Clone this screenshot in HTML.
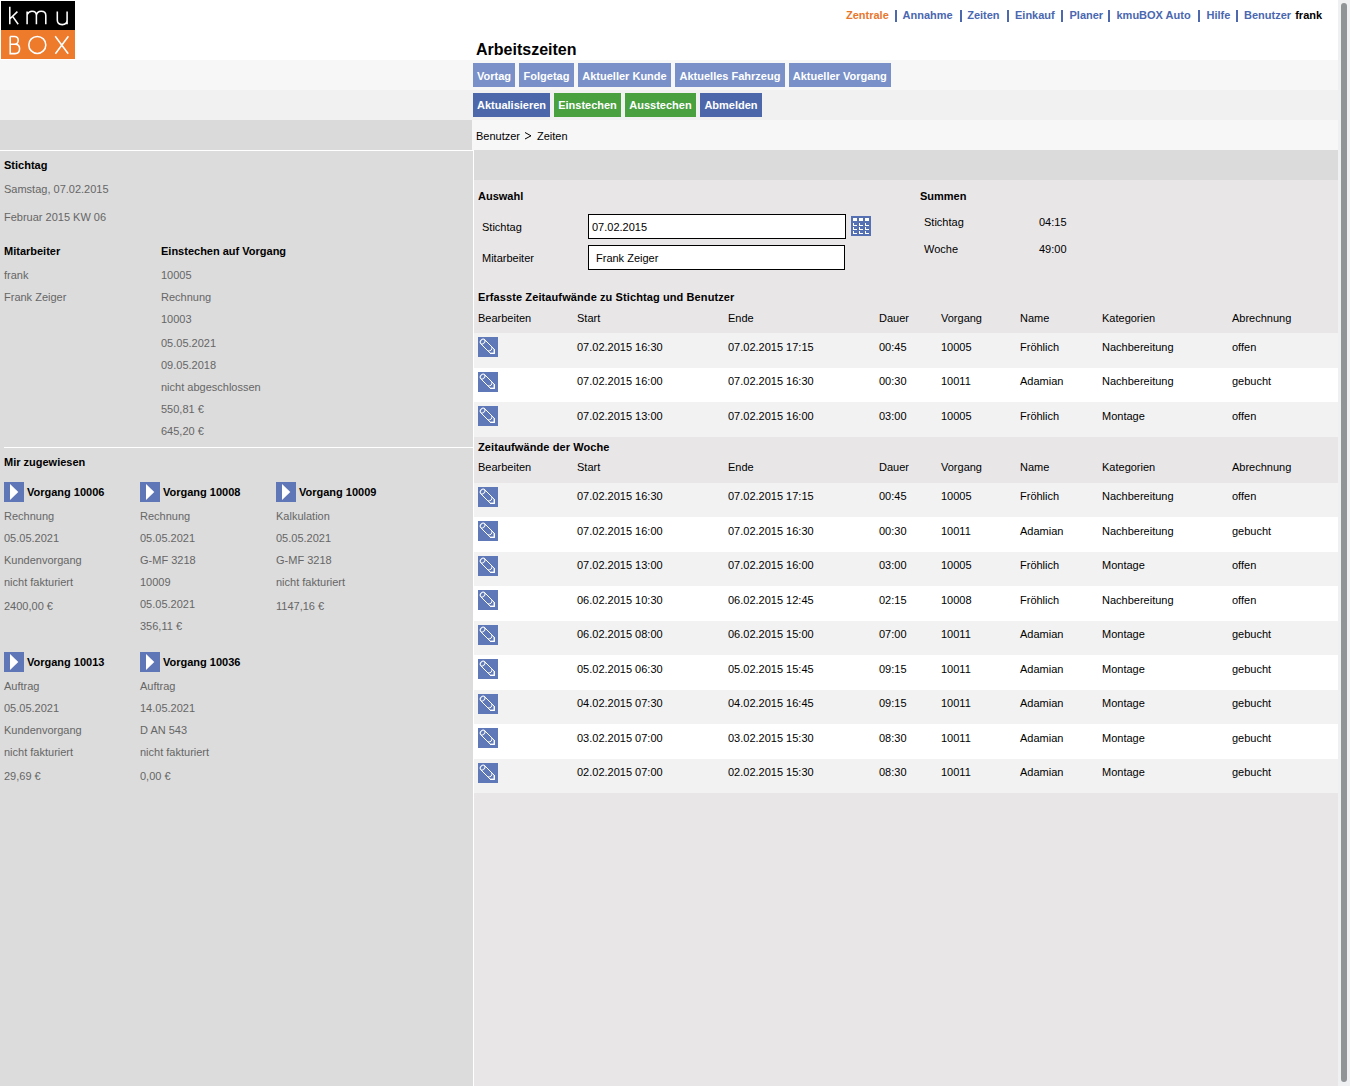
<!DOCTYPE html>
<html><head><meta charset="utf-8">
<style>
*{margin:0;padding:0;box-sizing:border-box}
html,body{width:1350px;height:1086px;overflow:hidden;background:#fff}
body{font-family:"Liberation Sans",sans-serif;font-size:11px;color:#000;position:relative}
.a{position:absolute;white-space:nowrap;line-height:13px}
.a svg{display:block}
.b{font-weight:bold}
.g{color:#666}
#logo{position:absolute;left:1px;top:1px;width:74px;height:58px}
#nav{position:absolute;top:0;left:0;font-weight:bold;line-height:13px;white-space:nowrap}
#nav a,#nav span{position:absolute;top:9px}
#nav a{color:#4a67b0;text-decoration:none}
#nav .sep{position:absolute;top:10px;width:2px;height:12px;background:#4d68ad}
.bar{position:absolute;left:0;width:1338px}
.btn{position:absolute;height:24px;color:#fff;font-weight:bold;line-height:24px;text-align:center;white-space:nowrap}
.l1{background:#7990c8}
.d1{background:#4c68ab}
.gr{background:#48a03f}
.inp{position:absolute;background:#fff;border:1px solid #000}
#sb{position:absolute;left:1338px;top:0;width:12px;height:1086px;background:#eff0f2}
#thumb{position:absolute;left:2.8px;top:2.8px;width:6px;height:1079px;border-radius:3px;background:#909497}
.row{position:absolute;left:474px;width:864px}

</style></head><body>
<svg id="logo" viewBox="0 0 74 58"><rect x="0" y="0" width="74" height="29" fill="#000"/><rect x="0" y="29" width="74" height="29.5" fill="#ee7a2b"/><g fill="none" stroke="#fff" stroke-width="1.55"><path d="M8.8 5.8 V23.2 M9 17.8 L16.4 10.6 M11.6 15.4 L17.2 23.2"/><path d="M26.1 23.2 V10.4 M26.1 13.6 Q27.8 10.2 31 10.2 Q35.4 10.2 35.4 14.4 V23.2 M35.4 14.4 Q35.9 10.2 40.2 10.2 Q44.8 10.2 44.8 14.4 V23.2"/><path d="M56.3 10.4 V19 Q56.3 23.6 61.2 23.6 Q66.1 23.6 66.1 19 V10.4 M66.1 19 V23.2"/><path d="M9.2 35.4 V52.6 H14 Q18.6 52.6 18.6 47.8 Q18.6 43.2 14 43.2 H9.2 M9.2 35.4 H13.4 Q17.2 35.4 17.2 39.2 Q17.2 43.2 13.2 43.2"/><circle cx="36.3" cy="43.9" r="8.5"/><path d="M54.2 35.2 L67.2 52.8 M67.4 35.2 L54.4 52.8"/></g></svg>
<div id="nav"><a style="left:846px;color:#e8772e">Zentrale</a><a style="left:902.5px">Annahme</a><a style="left:967.2px">Zeiten</a><a style="left:1015px">Einkauf</a><a style="left:1069.5px">Planer</a><a style="left:1116.5px">kmuBOX Auto</a><a style="left:1206.5px">Hilfe</a><a style="left:1244px">Benutzer</a><a style="left:1295.2px;color:#000">frank</a><i class="sep" style="left:895px"></i><i class="sep" style="left:960px"></i><i class="sep" style="left:1007px"></i><i class="sep" style="left:1061px"></i><i class="sep" style="left:1108px"></i><i class="sep" style="left:1198px"></i><i class="sep" style="left:1236px"></i></div>
<div class="a b" style="left:476px;top:41px;font-size:16px;line-height:18px">Arbeitszeiten</div>
<div class="bar" style="top:60px;height:30px;background:#f7f7f7"></div>
<div class="bar" style="top:90px;height:30px;background:#f1f1f1"></div>
<div class="bar" style="top:120px;height:30px;left:0;width:472px;background:#dadada"></div>
<div class="bar" style="top:120px;height:30px;left:472px;width:866px;background:#f7f7f7"></div>
<div class="bar" style="top:150px;height:936px;left:0;width:474px;background:#fff"></div>
<div class="bar" style="top:151px;height:935px;left:0;width:472.8px;background:#dcdcdc"></div>
<div class="bar" style="top:150px;height:30px;left:474px;width:864px;background:#dbdbdb"></div>
<div class="bar" style="top:180px;height:906px;left:474px;width:864px;background:#e8e6e7"></div>
<div class="a b" style="left:4px;top:159px;">Stichtag</div>
<div class="a g" style="left:4px;top:183px;">Samstag, 07.02.2015</div>
<div class="a g" style="left:4px;top:211px;">Februar 2015 KW 06</div>
<div class="a b" style="left:4px;top:245px;">Mitarbeiter</div>
<div class="a g" style="left:4px;top:269px;">frank</div>
<div class="a g" style="left:4px;top:291px;">Frank Zeiger</div>
<div class="a b" style="left:161px;top:245px;">Einstechen auf Vorgang</div>
<div class="a g" style="left:161px;top:269px;">10005</div>
<div class="a g" style="left:161px;top:291px;">Rechnung</div>
<div class="a g" style="left:161px;top:313px;">10003</div>
<div class="a g" style="left:161px;top:337px;">05.05.2021</div>
<div class="a g" style="left:161px;top:359px;">09.05.2018</div>
<div class="a g" style="left:161px;top:381px;">nicht abgeschlossen</div>
<div class="a g" style="left:161px;top:403px;">550,81 &euro;</div>
<div class="a g" style="left:161px;top:425px;">645,20 &euro;</div>
<div class="bar" style="top:447px;height:1px;left:4px;width:468.8px;background:#fff"></div>
<div class="a b" style="left:4px;top:456px;">Mir zugewiesen</div>
<div class="a" style="left:4px;top:482px;width:20px;height:20px"><svg width="20" height="20" viewBox="0 0 20 20"><rect width="20" height="20" fill="#5f77b7"/><path d="M6 2 L14.3 10 L6 18 Z" fill="#fff"/></svg></div>
<div class="a b" style="left:27px;top:486px;">Vorgang 10006</div>
<div class="a g" style="left:4px;top:510px;">Rechnung</div>
<div class="a g" style="left:4px;top:532px;">05.05.2021</div>
<div class="a g" style="left:4px;top:554px;">Kundenvorgang</div>
<div class="a g" style="left:4px;top:576px;">nicht fakturiert</div>
<div class="a g" style="left:4px;top:600px;">2400,00 &euro;</div>
<div class="a" style="left:140px;top:482px;width:20px;height:20px"><svg width="20" height="20" viewBox="0 0 20 20"><rect width="20" height="20" fill="#5f77b7"/><path d="M6 2 L14.3 10 L6 18 Z" fill="#fff"/></svg></div>
<div class="a b" style="left:163px;top:486px;">Vorgang 10008</div>
<div class="a g" style="left:140px;top:510px;">Rechnung</div>
<div class="a g" style="left:140px;top:532px;">05.05.2021</div>
<div class="a g" style="left:140px;top:554px;">G-MF 3218</div>
<div class="a g" style="left:140px;top:576px;">10009</div>
<div class="a g" style="left:140px;top:598px;">05.05.2021</div>
<div class="a g" style="left:140px;top:620px;">356,11 &euro;</div>
<div class="a" style="left:276px;top:482px;width:20px;height:20px"><svg width="20" height="20" viewBox="0 0 20 20"><rect width="20" height="20" fill="#5f77b7"/><path d="M6 2 L14.3 10 L6 18 Z" fill="#fff"/></svg></div>
<div class="a b" style="left:299px;top:486px;">Vorgang 10009</div>
<div class="a g" style="left:276px;top:510px;">Kalkulation</div>
<div class="a g" style="left:276px;top:532px;">05.05.2021</div>
<div class="a g" style="left:276px;top:554px;">G-MF 3218</div>
<div class="a g" style="left:276px;top:576px;">nicht fakturiert</div>
<div class="a g" style="left:276px;top:600px;">1147,16 &euro;</div>
<div class="a" style="left:4px;top:652px;width:20px;height:20px"><svg width="20" height="20" viewBox="0 0 20 20"><rect width="20" height="20" fill="#5f77b7"/><path d="M6 2 L14.3 10 L6 18 Z" fill="#fff"/></svg></div>
<div class="a b" style="left:27px;top:656px;">Vorgang 10013</div>
<div class="a g" style="left:4px;top:680px;">Auftrag</div>
<div class="a g" style="left:4px;top:702px;">05.05.2021</div>
<div class="a g" style="left:4px;top:724px;">Kundenvorgang</div>
<div class="a g" style="left:4px;top:746px;">nicht fakturiert</div>
<div class="a g" style="left:4px;top:770px;">29,69 &euro;</div>
<div class="a" style="left:140px;top:652px;width:20px;height:20px"><svg width="20" height="20" viewBox="0 0 20 20"><rect width="20" height="20" fill="#5f77b7"/><path d="M6 2 L14.3 10 L6 18 Z" fill="#fff"/></svg></div>
<div class="a b" style="left:163px;top:656px;">Vorgang 10036</div>
<div class="a g" style="left:140px;top:680px;">Auftrag</div>
<div class="a g" style="left:140px;top:702px;">14.05.2021</div>
<div class="a g" style="left:140px;top:724px;">D AN 543</div>
<div class="a g" style="left:140px;top:746px;">nicht fakturiert</div>
<div class="a g" style="left:140px;top:770px;">0,00 &euro;</div>
<div class="btn l1" style="left:473px;top:63px;width:42px;line-height:26px">Vortag</div>
<div class="btn l1" style="left:519px;top:63px;width:55px;line-height:26px">Folgetag</div>
<div class="btn l1" style="left:578px;top:63px;width:93px;line-height:26px">Aktueller Kunde</div>
<div class="btn l1" style="left:675px;top:63px;width:110px;line-height:26px">Aktuelles Fahrzeug</div>
<div class="btn l1" style="left:789px;top:63px;width:101.5px;line-height:26px">Aktueller Vorgang</div>
<div class="btn d1" style="left:473px;top:93px;width:77px;line-height:24px">Aktualisieren</div>
<div class="btn gr" style="left:554px;top:93px;width:67px;line-height:24px">Einstechen</div>
<div class="btn gr" style="left:625px;top:93px;width:71px;line-height:24px">Ausstechen</div>
<div class="btn d1" style="left:700px;top:93px;width:62px;line-height:24px">Abmelden</div>
<div class="a " style="left:476px;top:130px;">Benutzer</div>
<svg style="position:absolute;left:524px;top:131px" width="9" height="10" viewBox="0 0 9 10"><path d="M1 1.5 L7 4.8 L1 8" fill="none" stroke="#000" stroke-width="1"/></svg>
<div class="a " style="left:537px;top:130px;">Zeiten</div>
<div class="a b" style="left:478px;top:190px;">Auswahl</div>
<div class="a " style="left:482px;top:221px;">Stichtag</div>
<div class="a " style="left:482px;top:252px;">Mitarbeiter</div>
<div class="inp" style="left:588px;top:214px;width:258px;height:25px"></div>
<div class="inp" style="left:588px;top:245px;width:257px;height:25px"></div>
<div class="a " style="left:592px;top:221px;">07.02.2015</div>
<div class="a " style="left:596px;top:252px;">Frank Zeiger</div>
<div class="a" style="left:851px;top:216px;width:20px;height:20px"><svg width="20" height="20" viewBox="0 0 20 20"><rect width="20" height="20" fill="#5670b4"/><rect x="2" y="2" width="4" height="3" fill="#fff"/><path d="M2 7 h1 v2 h3 v1 h-4 Z" fill="#fff"/><path d="M2 11 h1 v2 h3 v1 h-4 Z" fill="#fff"/><path d="M2 15 h1 v2 h3 v1 h-4 Z" fill="#fff"/><rect x="8" y="2" width="4" height="3" fill="#fff"/><path d="M8 7 h1 v2 h3 v1 h-4 Z" fill="#fff"/><path d="M8 11 h1 v2 h3 v1 h-4 Z" fill="#fff"/><path d="M8 15 h1 v2 h3 v1 h-4 Z" fill="#fff"/><rect x="14" y="2" width="4" height="3" fill="#fff"/><path d="M14 7 h1 v2 h3 v1 h-4 Z" fill="#fff"/><path d="M14 11 h1 v2 h3 v1 h-4 Z" fill="#fff"/><path d="M14 15 h1 v2 h3 v1 h-4 Z" fill="#fff"/></svg></div>
<div class="a b" style="left:920px;top:190px;">Summen</div>
<div class="a " style="left:924px;top:216px;">Stichtag</div>
<div class="a " style="left:1039px;top:216px;">04:15</div>
<div class="a " style="left:924px;top:243px;">Woche</div>
<div class="a " style="left:1039px;top:243px;">49:00</div>
<div class="a b" style="left:478px;top:291px;letter-spacing:0.1px">Erfasste Zeitaufw&auml;nde zu Stichtag und Benutzer</div>
<div class="a " style="left:478px;top:312px;">Bearbeiten</div>
<div class="a " style="left:577px;top:312px;">Start</div>
<div class="a " style="left:728px;top:312px;">Ende</div>
<div class="a " style="left:879px;top:312px;">Dauer</div>
<div class="a " style="left:941px;top:312px;">Vorgang</div>
<div class="a " style="left:1020px;top:312px;">Name</div>
<div class="a " style="left:1102px;top:312px;">Kategorien</div>
<div class="a " style="left:1232px;top:312px;">Abrechnung</div>
<div class="row" style="top:333px;height:35px;background:#f2f2f2"></div>
<div class="a" style="left:478px;top:337px;width:20px;height:20px"><svg width="20" height="20" viewBox="0 0 20 20"><rect width="20" height="20" fill="#5f78b8"/><g fill="none" stroke="#fff" stroke-width="1"><ellipse cx="4.6" cy="4.6" rx="2.7" ry="2" transform="rotate(-45 4.6 4.6)"/><path d="M6.6 2.6 L14 10 M2.6 6.6 L10 14"/><path d="M14 10 Q14.2 14.2 10 14"/><path d="M10 14 L12.3 16.3 H16.3 V12.3 L14 10"/></g><path d="M12 15.7 H16.9 V16.9 H12 Z M15.7 12 H16.9 V16.9 H15.7 Z" fill="#fff"/></svg></div>
<div class="a " style="left:577px;top:341px;">07.02.2015 16:30</div>
<div class="a " style="left:728px;top:341px;">07.02.2015 17:15</div>
<div class="a " style="left:879px;top:341px;">00:45</div>
<div class="a " style="left:941px;top:341px;">10005</div>
<div class="a " style="left:1020px;top:341px;">Fr&ouml;hlich</div>
<div class="a " style="left:1102px;top:341px;">Nachbereitung</div>
<div class="a " style="left:1232px;top:341px;">offen</div>
<div class="row" style="top:368px;height:34px;background:#ffffff"></div>
<div class="a" style="left:478px;top:372px;width:20px;height:20px"><svg width="20" height="20" viewBox="0 0 20 20"><rect width="20" height="20" fill="#5f78b8"/><g fill="none" stroke="#fff" stroke-width="1"><ellipse cx="4.6" cy="4.6" rx="2.7" ry="2" transform="rotate(-45 4.6 4.6)"/><path d="M6.6 2.6 L14 10 M2.6 6.6 L10 14"/><path d="M14 10 Q14.2 14.2 10 14"/><path d="M10 14 L12.3 16.3 H16.3 V12.3 L14 10"/></g><path d="M12 15.7 H16.9 V16.9 H12 Z M15.7 12 H16.9 V16.9 H15.7 Z" fill="#fff"/></svg></div>
<div class="a " style="left:577px;top:375px;">07.02.2015 16:00</div>
<div class="a " style="left:728px;top:375px;">07.02.2015 16:30</div>
<div class="a " style="left:879px;top:375px;">00:30</div>
<div class="a " style="left:941px;top:375px;">10011</div>
<div class="a " style="left:1020px;top:375px;">Adamian</div>
<div class="a " style="left:1102px;top:375px;">Nachbereitung</div>
<div class="a " style="left:1232px;top:375px;">gebucht</div>
<div class="row" style="top:402px;height:35px;background:#f2f2f2"></div>
<div class="a" style="left:478px;top:406px;width:20px;height:20px"><svg width="20" height="20" viewBox="0 0 20 20"><rect width="20" height="20" fill="#5f78b8"/><g fill="none" stroke="#fff" stroke-width="1"><ellipse cx="4.6" cy="4.6" rx="2.7" ry="2" transform="rotate(-45 4.6 4.6)"/><path d="M6.6 2.6 L14 10 M2.6 6.6 L10 14"/><path d="M14 10 Q14.2 14.2 10 14"/><path d="M10 14 L12.3 16.3 H16.3 V12.3 L14 10"/></g><path d="M12 15.7 H16.9 V16.9 H12 Z M15.7 12 H16.9 V16.9 H15.7 Z" fill="#fff"/></svg></div>
<div class="a " style="left:577px;top:410px;">07.02.2015 13:00</div>
<div class="a " style="left:728px;top:410px;">07.02.2015 16:00</div>
<div class="a " style="left:879px;top:410px;">03:00</div>
<div class="a " style="left:941px;top:410px;">10005</div>
<div class="a " style="left:1020px;top:410px;">Fr&ouml;hlich</div>
<div class="a " style="left:1102px;top:410px;">Montage</div>
<div class="a " style="left:1232px;top:410px;">offen</div>
<div class="a b" style="left:478px;top:441px;letter-spacing:0.1px">Zeitaufw&auml;nde der Woche</div>
<div class="a " style="left:478px;top:461px;">Bearbeiten</div>
<div class="a " style="left:577px;top:461px;">Start</div>
<div class="a " style="left:728px;top:461px;">Ende</div>
<div class="a " style="left:879px;top:461px;">Dauer</div>
<div class="a " style="left:941px;top:461px;">Vorgang</div>
<div class="a " style="left:1020px;top:461px;">Name</div>
<div class="a " style="left:1102px;top:461px;">Kategorien</div>
<div class="a " style="left:1232px;top:461px;">Abrechnung</div>
<div class="row" style="top:483px;height:34px;background:#f2f2f2"></div>
<div class="a" style="left:478px;top:487px;width:20px;height:20px"><svg width="20" height="20" viewBox="0 0 20 20"><rect width="20" height="20" fill="#5f78b8"/><g fill="none" stroke="#fff" stroke-width="1"><ellipse cx="4.6" cy="4.6" rx="2.7" ry="2" transform="rotate(-45 4.6 4.6)"/><path d="M6.6 2.6 L14 10 M2.6 6.6 L10 14"/><path d="M14 10 Q14.2 14.2 10 14"/><path d="M10 14 L12.3 16.3 H16.3 V12.3 L14 10"/></g><path d="M12 15.7 H16.9 V16.9 H12 Z M15.7 12 H16.9 V16.9 H15.7 Z" fill="#fff"/></svg></div>
<div class="a " style="left:577px;top:490px;">07.02.2015 16:30</div>
<div class="a " style="left:728px;top:490px;">07.02.2015 17:15</div>
<div class="a " style="left:879px;top:490px;">00:45</div>
<div class="a " style="left:941px;top:490px;">10005</div>
<div class="a " style="left:1020px;top:490px;">Fr&ouml;hlich</div>
<div class="a " style="left:1102px;top:490px;">Nachbereitung</div>
<div class="a " style="left:1232px;top:490px;">offen</div>
<div class="row" style="top:517px;height:35px;background:#ffffff"></div>
<div class="a" style="left:478px;top:521px;width:20px;height:20px"><svg width="20" height="20" viewBox="0 0 20 20"><rect width="20" height="20" fill="#5f78b8"/><g fill="none" stroke="#fff" stroke-width="1"><ellipse cx="4.6" cy="4.6" rx="2.7" ry="2" transform="rotate(-45 4.6 4.6)"/><path d="M6.6 2.6 L14 10 M2.6 6.6 L10 14"/><path d="M14 10 Q14.2 14.2 10 14"/><path d="M10 14 L12.3 16.3 H16.3 V12.3 L14 10"/></g><path d="M12 15.7 H16.9 V16.9 H12 Z M15.7 12 H16.9 V16.9 H15.7 Z" fill="#fff"/></svg></div>
<div class="a " style="left:577px;top:525px;">07.02.2015 16:00</div>
<div class="a " style="left:728px;top:525px;">07.02.2015 16:30</div>
<div class="a " style="left:879px;top:525px;">00:30</div>
<div class="a " style="left:941px;top:525px;">10011</div>
<div class="a " style="left:1020px;top:525px;">Adamian</div>
<div class="a " style="left:1102px;top:525px;">Nachbereitung</div>
<div class="a " style="left:1232px;top:525px;">gebucht</div>
<div class="row" style="top:552px;height:34px;background:#f2f2f2"></div>
<div class="a" style="left:478px;top:556px;width:20px;height:20px"><svg width="20" height="20" viewBox="0 0 20 20"><rect width="20" height="20" fill="#5f78b8"/><g fill="none" stroke="#fff" stroke-width="1"><ellipse cx="4.6" cy="4.6" rx="2.7" ry="2" transform="rotate(-45 4.6 4.6)"/><path d="M6.6 2.6 L14 10 M2.6 6.6 L10 14"/><path d="M14 10 Q14.2 14.2 10 14"/><path d="M10 14 L12.3 16.3 H16.3 V12.3 L14 10"/></g><path d="M12 15.7 H16.9 V16.9 H12 Z M15.7 12 H16.9 V16.9 H15.7 Z" fill="#fff"/></svg></div>
<div class="a " style="left:577px;top:559px;">07.02.2015 13:00</div>
<div class="a " style="left:728px;top:559px;">07.02.2015 16:00</div>
<div class="a " style="left:879px;top:559px;">03:00</div>
<div class="a " style="left:941px;top:559px;">10005</div>
<div class="a " style="left:1020px;top:559px;">Fr&ouml;hlich</div>
<div class="a " style="left:1102px;top:559px;">Montage</div>
<div class="a " style="left:1232px;top:559px;">offen</div>
<div class="row" style="top:586px;height:35px;background:#ffffff"></div>
<div class="a" style="left:478px;top:590px;width:20px;height:20px"><svg width="20" height="20" viewBox="0 0 20 20"><rect width="20" height="20" fill="#5f78b8"/><g fill="none" stroke="#fff" stroke-width="1"><ellipse cx="4.6" cy="4.6" rx="2.7" ry="2" transform="rotate(-45 4.6 4.6)"/><path d="M6.6 2.6 L14 10 M2.6 6.6 L10 14"/><path d="M14 10 Q14.2 14.2 10 14"/><path d="M10 14 L12.3 16.3 H16.3 V12.3 L14 10"/></g><path d="M12 15.7 H16.9 V16.9 H12 Z M15.7 12 H16.9 V16.9 H15.7 Z" fill="#fff"/></svg></div>
<div class="a " style="left:577px;top:594px;">06.02.2015 10:30</div>
<div class="a " style="left:728px;top:594px;">06.02.2015 12:45</div>
<div class="a " style="left:879px;top:594px;">02:15</div>
<div class="a " style="left:941px;top:594px;">10008</div>
<div class="a " style="left:1020px;top:594px;">Fr&ouml;hlich</div>
<div class="a " style="left:1102px;top:594px;">Nachbereitung</div>
<div class="a " style="left:1232px;top:594px;">offen</div>
<div class="row" style="top:621px;height:34px;background:#f2f2f2"></div>
<div class="a" style="left:478px;top:625px;width:20px;height:20px"><svg width="20" height="20" viewBox="0 0 20 20"><rect width="20" height="20" fill="#5f78b8"/><g fill="none" stroke="#fff" stroke-width="1"><ellipse cx="4.6" cy="4.6" rx="2.7" ry="2" transform="rotate(-45 4.6 4.6)"/><path d="M6.6 2.6 L14 10 M2.6 6.6 L10 14"/><path d="M14 10 Q14.2 14.2 10 14"/><path d="M10 14 L12.3 16.3 H16.3 V12.3 L14 10"/></g><path d="M12 15.7 H16.9 V16.9 H12 Z M15.7 12 H16.9 V16.9 H15.7 Z" fill="#fff"/></svg></div>
<div class="a " style="left:577px;top:628px;">06.02.2015 08:00</div>
<div class="a " style="left:728px;top:628px;">06.02.2015 15:00</div>
<div class="a " style="left:879px;top:628px;">07:00</div>
<div class="a " style="left:941px;top:628px;">10011</div>
<div class="a " style="left:1020px;top:628px;">Adamian</div>
<div class="a " style="left:1102px;top:628px;">Montage</div>
<div class="a " style="left:1232px;top:628px;">gebucht</div>
<div class="row" style="top:655px;height:35px;background:#ffffff"></div>
<div class="a" style="left:478px;top:659px;width:20px;height:20px"><svg width="20" height="20" viewBox="0 0 20 20"><rect width="20" height="20" fill="#5f78b8"/><g fill="none" stroke="#fff" stroke-width="1"><ellipse cx="4.6" cy="4.6" rx="2.7" ry="2" transform="rotate(-45 4.6 4.6)"/><path d="M6.6 2.6 L14 10 M2.6 6.6 L10 14"/><path d="M14 10 Q14.2 14.2 10 14"/><path d="M10 14 L12.3 16.3 H16.3 V12.3 L14 10"/></g><path d="M12 15.7 H16.9 V16.9 H12 Z M15.7 12 H16.9 V16.9 H15.7 Z" fill="#fff"/></svg></div>
<div class="a " style="left:577px;top:663px;">05.02.2015 06:30</div>
<div class="a " style="left:728px;top:663px;">05.02.2015 15:45</div>
<div class="a " style="left:879px;top:663px;">09:15</div>
<div class="a " style="left:941px;top:663px;">10011</div>
<div class="a " style="left:1020px;top:663px;">Adamian</div>
<div class="a " style="left:1102px;top:663px;">Montage</div>
<div class="a " style="left:1232px;top:663px;">gebucht</div>
<div class="row" style="top:690px;height:34px;background:#f2f2f2"></div>
<div class="a" style="left:478px;top:694px;width:20px;height:20px"><svg width="20" height="20" viewBox="0 0 20 20"><rect width="20" height="20" fill="#5f78b8"/><g fill="none" stroke="#fff" stroke-width="1"><ellipse cx="4.6" cy="4.6" rx="2.7" ry="2" transform="rotate(-45 4.6 4.6)"/><path d="M6.6 2.6 L14 10 M2.6 6.6 L10 14"/><path d="M14 10 Q14.2 14.2 10 14"/><path d="M10 14 L12.3 16.3 H16.3 V12.3 L14 10"/></g><path d="M12 15.7 H16.9 V16.9 H12 Z M15.7 12 H16.9 V16.9 H15.7 Z" fill="#fff"/></svg></div>
<div class="a " style="left:577px;top:697px;">04.02.2015 07:30</div>
<div class="a " style="left:728px;top:697px;">04.02.2015 16:45</div>
<div class="a " style="left:879px;top:697px;">09:15</div>
<div class="a " style="left:941px;top:697px;">10011</div>
<div class="a " style="left:1020px;top:697px;">Adamian</div>
<div class="a " style="left:1102px;top:697px;">Montage</div>
<div class="a " style="left:1232px;top:697px;">gebucht</div>
<div class="row" style="top:724px;height:35px;background:#ffffff"></div>
<div class="a" style="left:478px;top:728px;width:20px;height:20px"><svg width="20" height="20" viewBox="0 0 20 20"><rect width="20" height="20" fill="#5f78b8"/><g fill="none" stroke="#fff" stroke-width="1"><ellipse cx="4.6" cy="4.6" rx="2.7" ry="2" transform="rotate(-45 4.6 4.6)"/><path d="M6.6 2.6 L14 10 M2.6 6.6 L10 14"/><path d="M14 10 Q14.2 14.2 10 14"/><path d="M10 14 L12.3 16.3 H16.3 V12.3 L14 10"/></g><path d="M12 15.7 H16.9 V16.9 H12 Z M15.7 12 H16.9 V16.9 H15.7 Z" fill="#fff"/></svg></div>
<div class="a " style="left:577px;top:732px;">03.02.2015 07:00</div>
<div class="a " style="left:728px;top:732px;">03.02.2015 15:30</div>
<div class="a " style="left:879px;top:732px;">08:30</div>
<div class="a " style="left:941px;top:732px;">10011</div>
<div class="a " style="left:1020px;top:732px;">Adamian</div>
<div class="a " style="left:1102px;top:732px;">Montage</div>
<div class="a " style="left:1232px;top:732px;">gebucht</div>
<div class="row" style="top:759px;height:34px;background:#f2f2f2"></div>
<div class="a" style="left:478px;top:763px;width:20px;height:20px"><svg width="20" height="20" viewBox="0 0 20 20"><rect width="20" height="20" fill="#5f78b8"/><g fill="none" stroke="#fff" stroke-width="1"><ellipse cx="4.6" cy="4.6" rx="2.7" ry="2" transform="rotate(-45 4.6 4.6)"/><path d="M6.6 2.6 L14 10 M2.6 6.6 L10 14"/><path d="M14 10 Q14.2 14.2 10 14"/><path d="M10 14 L12.3 16.3 H16.3 V12.3 L14 10"/></g><path d="M12 15.7 H16.9 V16.9 H12 Z M15.7 12 H16.9 V16.9 H15.7 Z" fill="#fff"/></svg></div>
<div class="a " style="left:577px;top:766px;">02.02.2015 07:00</div>
<div class="a " style="left:728px;top:766px;">02.02.2015 15:30</div>
<div class="a " style="left:879px;top:766px;">08:30</div>
<div class="a " style="left:941px;top:766px;">10011</div>
<div class="a " style="left:1020px;top:766px;">Adamian</div>
<div class="a " style="left:1102px;top:766px;">Montage</div>
<div class="a " style="left:1232px;top:766px;">gebucht</div>
<div id="sb"><div id="thumb"></div></div>
</body></html>
